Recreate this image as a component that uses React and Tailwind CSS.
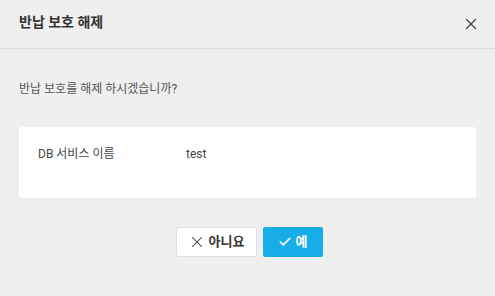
import React from 'react';
import { X, Check } from 'lucide-react';

export default function App() {
  return (
    <div
      className="w-[495px] h-[296px] bg-[#efefef] flex flex-col text-[#333]"
      style={{ fontFamily: "Roboto, 'Noto Sans CJK KR', sans-serif" }}
    >
      <div className="h-[49px] flex items-center justify-between pl-[19px] pr-[15px] border-b border-[#dcdcdc] shrink-0">
        <h2 className="text-[14px] font-bold text-[#333] -mt-[4px]">반납 보호 해제</h2>
        <X size={18} strokeWidth={1.7} className="text-[#444]" />
      </div>
      <div className="px-[19px] pt-[30px]">
        <p className="text-[12px] text-[#555] leading-[20px]">반납 보호를 해제 하시겠습니까?</p>
        <div className="mt-[28px] h-[71px] bg-white rounded-[3px] px-[19px] pt-[18px] flex text-[12px] text-[#444]">
          <span className="w-[148px]">DB 서비스 이름</span>
          <span>test</span>
        </div>
      </div>
      <div className="flex justify-center gap-[6px] mt-[29px] pl-[3px]">
        <button className="w-[81px] h-[30px] bg-white border border-[#dedede] rounded-[2px] flex items-center justify-center gap-[3px] text-[13px] font-bold text-[#333]">
          <X size={18} strokeWidth={1.4} />
          아니요
        </button>
        <button className="w-[60px] h-[30px] bg-[#17aee8] rounded-[2px] flex items-center justify-center gap-[4px] text-[13px] font-bold text-white">
          <Check size={14} strokeWidth={3} />
          예
        </button>
      </div>
    </div>
  );
}
